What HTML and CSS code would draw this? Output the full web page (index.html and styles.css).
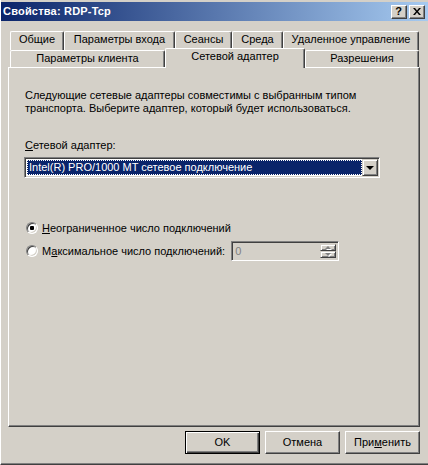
FILE: index.html
```html
<!DOCTYPE html>
<html lang="ru">
<head>
<meta charset="utf-8">
<title>Свойства: RDP-Tcp</title>
<link rel="stylesheet" href="styles.css">
</head>
<body>
<div class="window">
  <div class="titlebar">
    <span class="title">Свойства: RDP-Tcp</span>
    <div class="caption-btns">
      <div class="cap-btn help">?</div>
      <div class="cap-btn close">
        <svg width="8" height="7" viewBox="0 0 8 7"><path d="M0 0h2l2 2.5L6 0h2L5 3.5 8 7H6L4 4.5 2 7H0l3-3.5z" fill="#000"/></svg>
      </div>
    </div>
  </div>

  <div class="content">
    <div class="tabs">
      <div class="tab-row back">
        <div class="tab w-general">Общие</div>
        <div class="tab w-logon">Параметры входа</div>
        <div class="tab w-sessions">Сеансы</div>
        <div class="tab w-env">Среда</div>
        <div class="tab w-remote">Удаленное управление</div>
      </div>
      <div class="tab-row front">
        <div class="tab w-client">Параметры клиента</div>
        <div class="tab w-adapter selected">Сетевой адаптер</div>
        <div class="tab w-perm">Разрешения</div>
      </div>
    </div>

    <div class="panel">
      <p class="desc">Следующие сетевые адаптеры совместимы с выбранным типом<br>транспорта. Выберите адаптер, который будет использоваться.</p>
      <div class="label"><u>С</u>етевой адаптер:</div>
      <div class="combo">
        <div class="combo-value"><span>Intel(R) PRO/1000 MT сетевое подключение</span></div>
        <div class="combo-btn"><span class="arrow-down"></span></div>
      </div>

      <div class="radio-row first">
        <span class="radio checked"></span>
        <span class="radio-label"><u>Н</u>еограниченное число подключений</span>
      </div>
      <div class="radio-row">
        <span class="radio"></span>
        <span class="radio-label">М<u>а</u>ксимальное число подключений:</span>
        <div class="spin">
          <span class="spin-value">0</span>
          <div class="spin-btns">
            <div class="spin-btn"><span class="arrow-up-sm"></span></div>
            <div class="spin-btn"><span class="arrow-down-sm"></span></div>
          </div>
        </div>
      </div>
    </div>

    <div class="buttons">
      <div class="btn default">OK</div>
      <div class="btn">Отмена</div>
      <div class="btn">При<u>м</u>енить</div>
    </div>
  </div>
</div>
</body>
</html>
```
FILE: styles.css
```css
* { box-sizing: border-box; }

html, body {
  margin: 0;
  padding: 0;
  background: #d4d0c8;
}

body {
  width: 428px;
  height: 465px;
  overflow: hidden;
  font-family: "Liberation Sans", Arial, sans-serif;
  font-size: 11px;
  line-height: 13px;
  color: #000;
}

u { text-decoration: underline; text-underline-offset: 1px; }

.window {
  width: 428px;
  height: 465px;
  padding-top: 2px;
  border-left: 1px solid #ffffff;
  border-bottom: 1px solid #404040;
  box-shadow: inset 0 -1px #808080;
  display: flex;
  flex-direction: column;
}

/* ---------- title bar ---------- */
.titlebar {
  height: 19px;
  background: linear-gradient(to right, #0a246a, #a6caf0);
  display: flex;
  align-items: center;
  justify-content: space-between;
  padding: 0 3px 0 2px;
}

.title {
  color: #fff;
  font-weight: bold;
  font-size: 11px;
  letter-spacing: 0.2px;
  white-space: nowrap;
}

.caption-btns {
  display: flex;
  gap: 2px;
}

.cap-btn {
  width: 16px;
  height: 14px;
  background: #d4d0c8;
  border: 1px solid;
  border-color: #ffffff #404040 #404040 #ffffff;
  box-shadow: inset -1px -1px #808080;
  display: flex;
  align-items: center;
  justify-content: center;
  font-weight: bold;
  font-size: 11px;
  line-height: 11px;
}

.cap-btn.help { padding: 0 1px 0 0; }
.cap-btn.close svg { display: block; margin: 0 1px 0 0; }

/* ---------- content ---------- */
.content {
  padding: 10px 8px 0 7px;
  display: flex;
  flex-direction: column;
}

.tabs {
  padding-left: 2px;
}

.tab-row {
  display: flex;
}

.tab-row.back { height: 19px; }

.tab-row.front {
  height: 17px;
  align-items: flex-end;
}

.tab {
  background: #d4d0c8;
  border-top: 1px solid #ffffff;
  border-left: 1px solid #ffffff;
  border-right: 1px solid #404040;
  border-radius: 2px 2px 0 0;
  box-shadow: inset -1px 0 #808080;
  text-align: center;
  white-space: nowrap;
  padding-top: 1px;
}

.tab-row.back .tab { height: 19px; }
.tab-row.front .tab { height: 17px; }

.tab-row.front .tab.selected {
  height: 20px;
  margin-bottom: -1px;
  position: relative;
  z-index: 1;
}

.w-general  { width: 54px; }
.w-logon    { width: 111px; }
.w-sessions { width: 57px; }
.w-env      { width: 51px; }
.w-remote   { width: 136px; }
.w-client   { width: 155px; }
.w-adapter  { width: 140px; }
.w-perm     { width: 114px; }

/* ---------- panel ---------- */
.panel {
  width: 412px;
  height: 360px;
  border-top: 1px solid #ffffff;
  border-left: 1px solid #ffffff;
  border-right: 1px solid #404040;
  border-bottom: 1px solid #404040;
  box-shadow: inset -1px -1px #808080;
  padding: 21px 15px 0 16px;
}

.desc {
  margin: 0;
  white-space: nowrap;
}

.label {
  margin-top: 24px;
}

.combo {
  margin-top: 5px;
  margin-left: -1px;
  width: 356px;
  height: 21px;
  border: 1px solid;
  border-color: #808080 #ffffff #ffffff #808080;
  box-shadow: inset 1px 1px #404040, inset -1px -1px #d4d0c8;
  background: #ffffff;
  padding: 1px;
  display: flex;
}

.combo-value {
  flex: 1;
  margin: 1px 0 1px 1px;
  background: #0a246a;
  border: 1px dotted #ffffff;
  color: #ffffff;
  line-height: 13px;
  padding-left: 1px;
  white-space: nowrap;
  overflow: hidden;
}

.combo-btn {
  width: 16px;
  height: 17px;
  background: #d4d0c8;
  border: 1px solid;
  border-color: #d4d0c8 #404040 #404040 #d4d0c8;
  box-shadow: inset 1px 1px #ffffff, inset -1px -1px #808080;
  display: flex;
  align-items: center;
  justify-content: center;
}

.arrow-down {
  width: 0;
  height: 0;
  border-left: 4px solid transparent;
  border-right: 4px solid transparent;
  border-top: 4px solid #000;
  margin-top: 1px;
  margin-left: -1px;
}

/* ---------- radios ---------- */
.radio-row {
  height: 20px;
  display: flex;
  align-items: center;
  margin-top: 3px;
}

.radio-row.first {
  margin-top: 40px;
}

.radio {
  width: 12px;
  height: 12px;
  margin-left: 1px;
  margin-right: 4px;
  border-radius: 50%;
  border: 1px solid;
  border-color: #808080 #ffffff #ffffff #808080;
  background: #ffffff;
  box-shadow: inset 1px 1px #404040, inset -1px -1px #d4d0c8;
  display: flex;
  align-items: center;
  justify-content: center;
  flex: none;
}

.radio.checked::after {
  content: "";
  width: 4px;
  height: 4px;
  border-radius: 1px;
  background: #000;
}

.radio-label {
  white-space: nowrap;
}

.spin {
  margin-left: 6px;
  width: 108px;
  height: 20px;
  border: 1px solid;
  border-color: #808080 #ffffff #ffffff #808080;
  box-shadow: inset 1px 1px #404040, inset -1px -1px #d4d0c8;
  background: #d4d0c8;
  padding: 2px 2px 2px 3px;
  display: flex;
  justify-content: space-between;
}

.spin-value {
  color: #808080;
  line-height: 14px;
}

.spin-btns {
  width: 16px;
  display: flex;
  flex-direction: column;
}

.spin-btn {
  flex: 1;
  background: #d4d0c8;
  border: 1px solid;
  border-color: #d4d0c8 #404040 #404040 #d4d0c8;
  box-shadow: inset 1px 1px #ffffff, inset -1px -1px #808080;
  display: flex;
  align-items: center;
  justify-content: center;
}

.arrow-up-sm,
.arrow-down-sm {
  width: 0;
  height: 0;
  border-left: 3px solid transparent;
  border-right: 3px solid transparent;
  filter: drop-shadow(1px 1px 0 #ffffff);
}

.arrow-up-sm { border-bottom: 3px solid #808080; }
.arrow-down-sm { border-top: 3px solid #808080; }

/* ---------- bottom buttons ---------- */
.buttons {
  margin-top: 4px;
  display: flex;
  justify-content: flex-end;
  gap: 5px;
}

.btn {
  width: 75px;
  height: 23px;
  background: #d4d0c8;
  border: 1px solid;
  border-color: #ffffff #404040 #404040 #ffffff;
  box-shadow: inset -1px -1px #808080;
  display: flex;
  align-items: center;
  justify-content: center;
  white-space: nowrap;
}

.btn.default {
  border-color: #000;
  box-shadow: inset 1px 1px #ffffff, inset -1px -1px #404040, inset -2px -2px #808080;
}
```
